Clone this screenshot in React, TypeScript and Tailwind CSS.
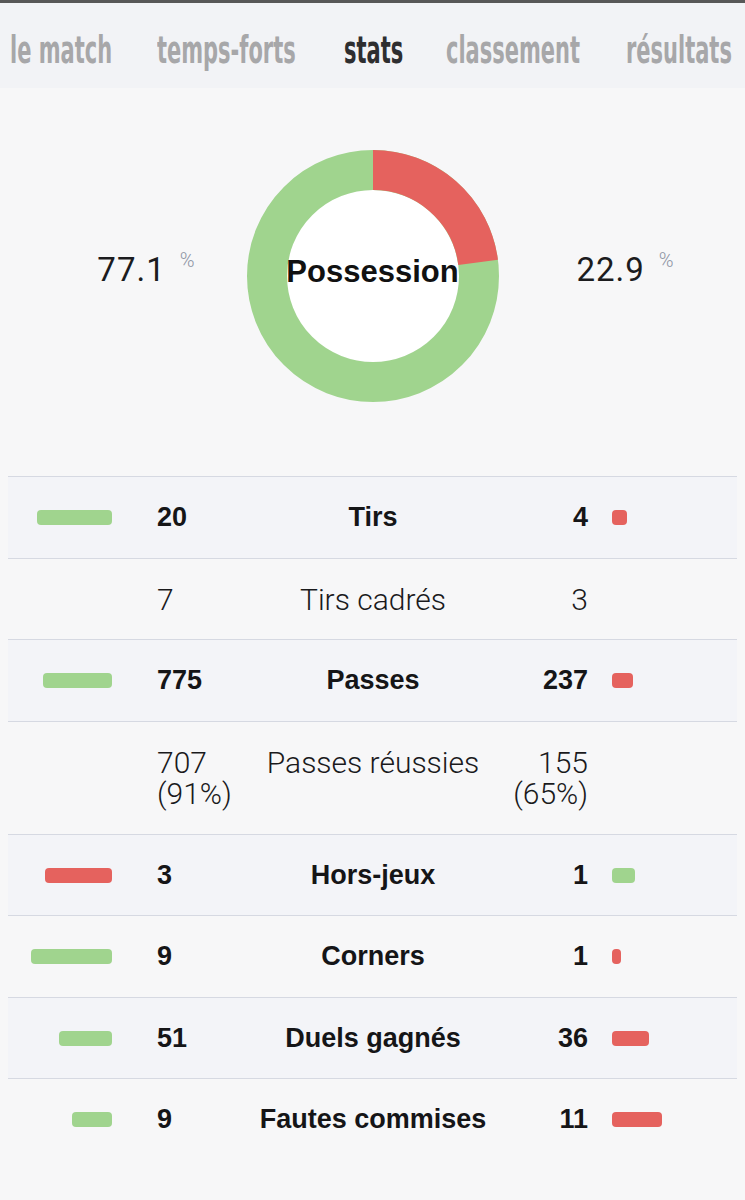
import React from "react";

type Row = {
  label: string;
  l: string;
  r: string;
  bold?: boolean;
  lv?: number;
  rv?: number;
  lc?: "g" | "r";
  rc?: "g" | "r";
};

const rows: Row[] = [
  { label: "Tirs", l: "20", r: "4", bold: true, lv: 20, rv: 4, lc: "g", rc: "r" },
  { label: "Tirs cadrés", l: "7", r: "3" },
  { label: "Passes", l: "775", r: "237", bold: true, lv: 775, rv: 237, lc: "g", rc: "r" },
  { label: "Passes réussies", l: "707 (91%)", r: "155 (65%)" },
  { label: "Hors-jeux", l: "3", r: "1", bold: true, lv: 3, rv: 1, lc: "r", rc: "g" },
  { label: "Corners", l: "9", r: "1", bold: true, lv: 9, rv: 1, lc: "g", rc: "r" },
  { label: "Duels gagnés", l: "51", r: "36", bold: true, lv: 51, rv: 36, lc: "g", rc: "r" },
  { label: "Fautes commises", l: "9", r: "11", bold: true, lv: 9, rv: 11, lc: "g", rc: "r" },
];

const navItems = [
  { t: "le match", w: "w-[103px]", active: false },
  { t: "temps-forts", w: "w-[143px]", active: false },
  { t: "stats", w: "w-[58px]", active: true },
  { t: "classement", w: "w-[136px]", active: false },
  { t: "résultats", w: "w-[104px]", active: false },
];

function Bar({ value, total, color }: { value: number; total: number; color: "g" | "r" }) {
  const w = (value / total) * 90;
  return (
    <div
      className={`h-[15px] rounded-[4px] ${color === "g" ? "bg-[#a0d48e]" : "bg-[#e5625e]"}`}
      style={{ width: `${w}px` }}
    />
  );
}

function Donut() {
  const r = 106;
  const c = 2 * Math.PI * r;
  const red = c * 0.229;
  return (
    <div className="relative w-[252px] h-[252px]">
      <svg width="252" height="252" viewBox="0 0 252 252">
        <circle cx="126" cy="126" r="86" fill="#ffffff" />
        <circle cx="126" cy="126" r={r} fill="none" stroke="#a0d48e" strokeWidth="40" />
        <circle
          cx="126"
          cy="126"
          r={r}
          fill="none"
          stroke="#e5625e"
          strokeWidth="40"
          strokeDasharray={`${red} ${c}`}
          transform="rotate(-90 126 126)"
        />
      </svg>
      <div className="absolute inset-0 flex items-center justify-center pb-[10px]">
        <span className="font-['Liberation_Sans',Arial,sans-serif] font-bold text-[31px] text-[#111] leading-none">
          Possession
        </span>
      </div>
    </div>
  );
}

function Pct({ v }: { v: string }) {
  return (
    <div className="flex items-start gap-[14px]">
      <span className="font-['Roboto',sans-serif] font-normal text-[33px] tracking-[1px] leading-none text-[#1c1c1e]">
        {v}
      </span>
      <span className="font-['Roboto',sans-serif] font-light text-[20px] leading-none text-[#8e95a4] -mt-[3px]">
        %
      </span>
    </div>
  );
}

export default function App() {
  return (
    <div className="w-[745px] min-h-[1200px] bg-[#f7f7f8]">
      <div className="border-t-[3px] border-[#585858] bg-[#f2f3f6] h-[88px] flex items-center pl-[10px] pt-[9px] gap-[44px] overflow-hidden">
        {navItems.map((n) => (
          <div key={n.t} className={`${n.w} shrink-0 h-[40px] flex items-center`}>
            <span
              className={`inline-block whitespace-nowrap origin-left scale-x-[0.63] font-['DejaVu_Sans_Condensed','DejaVu_Sans',sans-serif] font-bold text-[37px] leading-none ${
                n.active ? "text-[#2e2e30]" : "text-[#a7a7a9]"
              }`}
            >
              {n.t}
            </span>
          </div>
        ))}
      </div>

      <div className="grid grid-cols-[1fr_252px_1fr] items-center pt-[62px]">
        <div className="flex justify-end pr-[52px] pb-[14px]">
          <Pct v="77.1" />
        </div>
        <Donut />
        <div className="flex justify-start pl-[78px] pb-[14px]">
          <Pct v="22.9" />
        </div>
      </div>

      <div className="mx-[8px] mt-[74px] border-t-[1.5px] border-[#d6d9e2]">
        {rows.map((row, i) => {
          const total = (row.lv ?? 0) + (row.rv ?? 0);
          const txt = row.bold
            ? "font-['Liberation_Sans',Arial,sans-serif] font-bold text-[27px] text-[#151517]"
            : "font-['Roboto',sans-serif] font-light text-[30px] text-[#1a1a1c]";
          return (
            <div
              key={row.label}
              className={`grid grid-cols-[149px_95px_1fr_94px_149px] items-start pt-[25px] pb-[24px] leading-[31.5px] ${
                i < rows.length - 1 ? "border-b-[1.5px] border-[#d6d9e2]" : ""
              } ${i % 2 === 0 ? "bg-[#f3f4f8]" : ""}`}
            >
              <div className="h-[31.5px] flex items-center justify-end pr-[45px]">
                {row.lv !== undefined && row.lc && <Bar value={row.lv} total={total} color={row.lc} />}
              </div>
              <div className={`${txt} text-left`}>{row.l}</div>
              <div className={`${txt} text-center whitespace-nowrap`}>{row.label}</div>
              <div className={`${txt} text-right`}>{row.r}</div>
              <div className="h-[31.5px] flex items-center justify-start pl-[24px]">
                {row.rv !== undefined && row.rc && <Bar value={row.rv} total={total} color={row.rc} />}
              </div>
            </div>
          );
        })}
      </div>
    </div>
  );
}
